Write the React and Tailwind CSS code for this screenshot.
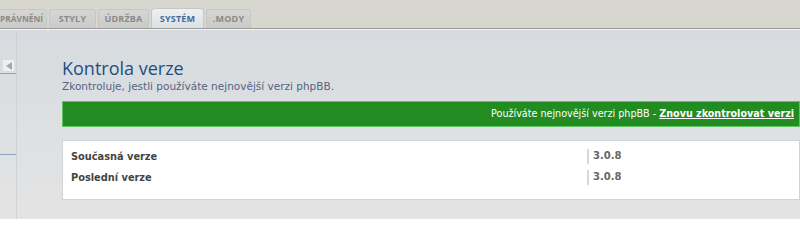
const tabs = [
  { label: "PRÁVNĚNÍ", w: "w-[47px]", first: true },
  { label: "STYLY", w: "w-[47px]" },
  { label: "ÚDRŽBA", w: "w-[51px]" },
  { label: "SYSTÉM", w: "w-[53px]", active: true },
  { label: ".MODY", w: "w-[45px]" },
];

const rows = [
  { name: "Současná verze", value: "3.0.8" },
  { name: "Poslední verze", value: "3.0.8" },
];

const App = () => {
  return (
    <div className="w-[800px] h-[219px] overflow-hidden bg-[#dfe0e2] font-['DejaVu_Sans',sans-serif]">
      {/* Tab bar */}
      <div className="h-[28px] bg-[#d7d6cf] flex items-end gap-[2px]">
        {tabs.map((t) => (
          <div
            key={t.label}
            className={`${t.w} ${
              t.active
                ? "h-[20px] bg-gradient-to-b from-[#eef0f1] to-[#dde1e4] text-[#3e6c9e] border-[#c4c8cb]"
                : "h-[19px] bg-gradient-to-b from-[#d6d6d4] to-[#cacac8] text-[#8a8a88] border-[#c6c6c3]"
            } ${t.first ? "justify-start border-l-0 rounded-tl-none text-[8.4px]" : "justify-center text-[9px] tracking-[0.02em]"} border border-b-0 rounded-t-[4px] flex items-center font-bold whitespace-nowrap font-['Open_Sans',sans-serif]`}
          >
            {t.label}
          </div>
        ))}
      </div>
      <div className="h-[1px] bg-[#9c9c9a]" />
      <div className="h-[1px] bg-[#f2f2f0]" />

      {/* Body */}
      <div className="flex h-[189px] bg-gradient-to-b from-[#d7dbdf] to-[#e4e4e4]">
        {/* Sidebar */}
        <div className="w-[17px] border-r border-[#cfd2d5] flex flex-col">
          <div className="h-[30px]" />
          <div className="ml-[3px] w-[11px] h-[11px] bg-[#eef0f2] flex items-center justify-center">
            <div className="w-0 h-0 border-y-[4px] border-y-transparent border-r-[6px] border-r-[#a3a7ab]" />
          </div>
          <div className="h-[2px]" />
          <div className="h-[1px] bg-[#8fa5bc]" />
          <div className="h-[80px]" />
          <div className="h-[1px] bg-[#8fa5bc]" />
        </div>

        {/* Main */}
        <div className="flex-1 pl-[45px] pt-[28px]">
          <h1 className="text-[#1d4e85] text-[18px] leading-[21px] font-['Open_Sans',sans-serif]">
            Kontrola verze
          </h1>
          <p className="text-[#536482] text-[10.5px] leading-[14px] font-['DejaVu_Sans',sans-serif]">
            Zkontroluje, jestli používáte nejnovější verzi phpBB.
          </p>

          <div className="mt-[8px] h-[26px] bg-[#228b22] border border-[#5fc15f] flex items-center justify-end pr-[5px] text-white text-[9.6px]">
            Používáte nejnovější verzi phpBB -&nbsp;
            <a href="#" className="font-bold underline">
              Znovu zkontrolovat verzi
            </a>
          </div>

          <div className="mt-[13px] h-[60px] bg-white border border-[#d0d2d4] pt-[5px] pl-[8px]">
            {rows.map((r) => (
              <div key={r.name} className="flex h-[21px] items-center">
                <div className="w-[516px] text-[9.8px] font-bold text-[#444444] pt-[2px]">
                  {r.name}
                </div>
                <div className="h-[15px] border-l-2 border-[#d8d8d8] pl-[4px] text-[10px] font-bold text-[#666666] leading-[13px]">
                  {r.value}
                </div>
              </div>
            ))}
          </div>
        </div>
      </div>
    </div>
  );
};

export default App;
